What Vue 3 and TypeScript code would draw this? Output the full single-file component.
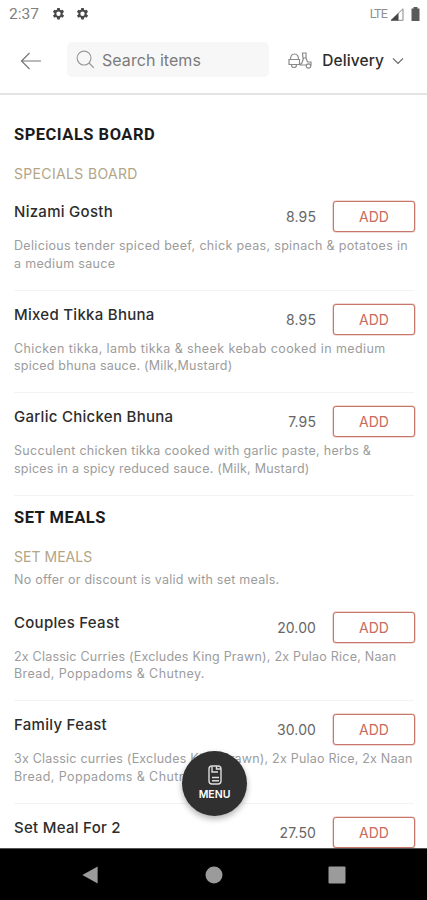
<script setup lang="ts">
interface TextLine {
  text: string
  tracking: number
}

interface MenuItem {
  name: string
  price: string
  lines: TextLine[]
}

interface MenuSection {
  title: string
  tracking: number
  note?: string
  items: MenuItem[]
}

const sections: MenuSection[] = [
  {
    title: 'SPECIALS BOARD',
    tracking: 0.34,
    items: [
      {
        name: 'Nizami Gosth',
        price: '8.95',
        lines: [
          { text: 'Delicious tender spiced beef, chick peas, spinach & potatoes in', tracking: 0.33 },
          { text: 'a medium sauce', tracking: 0.33 },
        ],
      },
      {
        name: 'Mixed Tikka Bhuna',
        price: '8.95',
        lines: [
          { text: 'Chicken tikka, lamb tikka & sheek kebab cooked in medium', tracking: 0.41 },
          { text: 'spiced bhuna sauce. (Milk,Mustard)', tracking: 0.21 },
        ],
      },
      {
        name: 'Garlic Chicken Bhuna',
        price: '7.95',
        lines: [
          { text: 'Succulent chicken tikka cooked with garlic paste, herbs &', tracking: 0.3 },
          { text: 'spices in a spicy reduced sauce. (Milk, Mustard)', tracking: 0.22 },
        ],
      },
    ],
  },
  {
    title: 'SET MEALS',
    tracking: 0.03,
    note: 'No offer or discount is valid with set meals.',
    items: [
      {
        name: 'Couples Feast',
        price: '20.00',
        lines: [
          { text: '2x Classic Curries (Excludes King Prawn), 2x Pulao Rice, Naan', tracking: 0.22 },
          { text: 'Bread, Poppadoms & Chutney.', tracking: 0.4 },
        ],
      },
      {
        name: 'Family Feast',
        price: '30.00',
        lines: [
          { text: '3x Classic curries (Excludes King Prawn), 2x Pulao Rice, 2x Naan', tracking: 0.21 },
          { text: 'Bread, Poppadoms & Chutney.', tracking: 0.4 },
        ],
      },
      { name: 'Set Meal For 2', price: '27.50', lines: [] },
    ],
  },
]
</script>

<template>
  <div class="screen">
    <header class="status">
      <span class="clock">2:37</span>
      <svg v-for="n in 2" :key="n" class="gear" viewBox="0 0 24 24">
        <path fill-rule="evenodd" d="M9.700 1h4.600l.6 3.200 1.900 1.100 3.100-1.100 2.300 4-2.500 2.100v2.400l2.500 2.100-2.300 4-3.100-1.100-1.900 1.100-.6 3.300H9.700l-.6-3.300-1.900-1.100-3.100 1.100-2.300-4 2.500-2.100v-2.400L1.800 8.200l2.300-4 3.100 1.100 1.900-1.100zM12 7.500a4 4 0 1 0 0 8 4 4 0 0 0 0-8z" />
      </svg>
      <span class="lte">LTE</span>
      <svg class="signal" viewBox="0 0 14 13">
        <path d="M13 .8V12.300H1z" fill="none" stroke="#888" />
        <path d="M8.500 5v7.500H.7z" fill="#444" />
      </svg>
      <svg class="battery" viewBox="0 0 9 14"><path d="M2.500 0h4v1.500H8.500V14H.5V1.500h2z" fill="#5a5a5a" /></svg>
    </header>

    <div class="toolbar">
      <svg class="back" viewBox="0 0 22 18"><path d="M21 9H1.500M9.500 1 1.500 9l8 8" /></svg>
      <div class="search">
        <svg class="lens" viewBox="0 0 20 20"><circle cx="8.500" cy="8.500" r="7.300" /><path d="m13.700 13.700 5 5" /></svg>
        <span>Search items</span>
      </div>
      <svg class="scooter" viewBox="0 0 24 18">
        <path d="M2.500 7.500C2.500 4 4 2 6.500 2s4 2 4 5.500M1 7.500h10.500v5H1zM14.500 1h3.500v5h-3zM15.500 6l-1.500 5-2.500 2M18 6l1.500 4h3.500v3.500M12 13h7" />
        <path d="M3.500 13a2.500 2.500 0 0 0 5 0" /><circle cx="20.500" cy="14" r="2.200" />
      </svg>
      <span class="mode">Delivery</span>
      <svg class="chevron" viewBox="0 0 12 8"><path d="m1 1.300 5 5 5-5" /></svg>
    </div>

    <main class="menu">
      <section v-for="section in sections" :key="section.title" class="section">
        <h1>{{ section.title }}</h1>
        <h2 :style="{ letterSpacing: section.tracking + 'px' }">{{ section.title }}</h2>
        <p v-if="section.note" class="note">{{ section.note }}</p>
        <article v-for="item in section.items" :key="item.name" class="item">
          <div class="row">
            <h3>{{ item.name }}</h3>
            <span class="price">{{ item.price }}</span>
            <button>ADD</button>
          </div>
          <div class="desc">
            <p v-for="line in item.lines" :key="line.text" :style="{ letterSpacing: line.tracking + 'px' }">{{ line.text }}</p>
          </div>
        </article>
      </section>
    </main>

    <button class="fab">
      <svg viewBox="0 0 14 20"><rect x="1" y="1" width="12" height="18" rx="3" /><path d="M4 2v5h6M8.500 1v3H13M4 12.500h7M4 15.700h7" /></svg>
      <span>MENU</span>
    </button>

    <nav class="navbar">
      <svg viewBox="0 0 18 20"><path d="M17.500.5v19L.5 10z" /></svg>
      <svg viewBox="0 0 18 18"><circle cx="9" cy="9" r="8.500" /></svg>
      <svg viewBox="0 0 18 18"><rect x=".5" y=".5" width="17" height="17" rx="1" /></svg>
    </nav>
  </div>
</template>

<style>
body { margin: 0; background: #fff; }
</style>

<style scoped>
.screen {
  position: relative;
  display: flex;
  flex-direction: column;
  width: 427px;
  height: 900px;
  overflow: hidden;
  background: #fff;
  font-family: Inter, "Liberation Sans", sans-serif;
  white-space: nowrap;
}
h1, h2, h3, p { margin: 0; font-weight: 400; }
svg { flex: none; display: block; }
.status { display: flex; align-items: center; height: 28px; padding: 0 7px 0 9px; box-sizing: border-box; flex: none; }
.clock { width: 43px; font: 400 15.500px/28px Roboto, sans-serif; color: #808080; }
.gear { width: 13px; height: 14px; margin-right: 11px; fill: #484848; }
.lte { margin-left: auto; font: 400 12.500px/28px Roboto, sans-serif; letter-spacing: -.8px; color: #909090; }
.signal { width: 14px; height: 13px; margin: 0 7px 0 3px; }
.battery { width: 9px; height: 14px; margin-top: -1px; }
.toolbar { display: flex; align-items: center; flex: none; height: 67px; padding: 0 23px 0 20px; box-sizing: border-box; border-bottom: 2px solid #e4e4e4; }
.back { width: 22px; height: 18px; fill: none; stroke: #777; stroke-width: 1.200; }
.search { display: flex; align-items: center; gap: 7px; width: 203px; height: 35px; margin: -2px 0 0 25px; padding-left: 9px; box-sizing: border-box; border-radius: 5px; background: #f7f7f7; font-size: 16px; letter-spacing: .05px; color: #7b7b7b; }
.lens { width: 19px; height: 19px; fill: none; stroke: #999; stroke-width: 1.200; }
.scooter { width: 24px; height: 18px; margin-left: 19px; fill: none; stroke: #8a8a8a; stroke-width: 1.200; }
.mode { width: 63px; margin-left: 10px; font-size: 15.500px; font-weight: 500; letter-spacing: .1px; color: #2d2d2d; }
.chevron { width: 12px; height: 8px; margin-left: 7px; fill: none; stroke: #666; stroke-width: 1.200; }
.menu { flex: none; height: 753px; overflow: hidden; padding: 28px 13px 0 14px; box-sizing: border-box; }
.section + .section { padding-top: 11px; }
.section:first-child h1 { padding-top: 1px; }
h1 { height: 21px; font: 700 16.500px/21px Roboto, sans-serif; letter-spacing: .5px; color: #1b1b1b; }
h2 { height: 20px; margin-top: 19px; font-size: 14px; line-height: 20px; color: #b3a585; }
.note { height: 18px; margin-top: 4px; margin-bottom: 10px; font-size: 12.500px; line-height: 18px; letter-spacing: .24px; color: #9c9c9c; }
.item { height: 102.500px; box-sizing: border-box; border-bottom: 1px solid #f3f3f3; padding-top: 13px; }
h2 + .item { height: 106.500px; padding-top: 17px; }
.row { display: flex; height: 31px; margin-right: -1px; }
h3 { flex: 1; font-size: 15px; line-height: 21px; font-weight: 500; letter-spacing: .28px; color: #2d2d2d; }
.price { margin-right: 17px; font-size: 14px; line-height: 31px; letter-spacing: .1px; color: #666; }
.row button { width: 82px; height: 31px; padding: 0; border: 1px solid #c87669; border-radius: 3px; background: #fff; box-shadow: 0 0 0 .5px #e3b4ac; font: 400 14px/29px Inter, sans-serif; color: #c86a5c; }
.desc { margin-top: 5px; font-size: 12.500px; line-height: 17.500px; color: #9c9c9c; }
.fab { position: absolute; left: 182px; top: 751px; display: flex; flex-direction: column; align-items: center; justify-content: center; gap: 3px; width: 65px; height: 65px; padding: 0 0 1px; border: 0; border-radius: 50%; background: #303030; box-shadow: 0 3px 6px rgba(0,0,0,.3); color: #fff; font: 600 10.500px/13px Inter, sans-serif; }
.fab svg { width: 14px; height: 20px; fill: none; stroke: #ddd; stroke-width: 1.400; }
.navbar { display: flex; align-items: center; justify-content: space-between; flex: none; height: 52px; padding: 0 81px; box-sizing: border-box; border-top: 1px solid #555; background: #000; }
.navbar svg { width: 18px; height: 18px; fill: #9b9b9b; }
</style>
